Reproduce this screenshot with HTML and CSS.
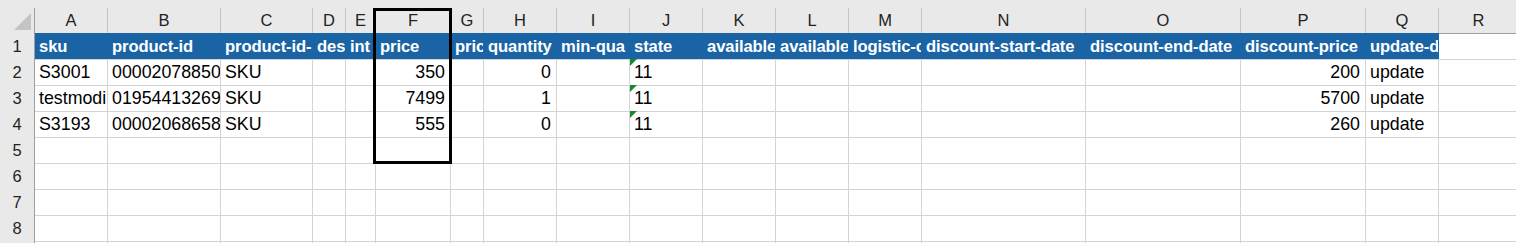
FILE: index.html
```html
<!DOCTYPE html>
<html lang="en">
<head>
  <meta charset="UTF-8" />
  <title>Sheet1</title>
  <link rel="stylesheet" href="styles.css">
</head>
<body>
  <div class="sheet">
    <div class="strip"></div>

    <div class="row cols">
      <div class="corner"><svg width="17" height="17" viewBox="0 0 17 17"><polygon points="17,0 17,17 0,17" fill="#c4c4c4"/></svg></div>
      <div class="ch">A</div><div class="ch">B</div><div class="ch">C</div><div class="ch">D</div>
      <div class="ch">E</div><div class="ch">F</div><div class="ch">G</div><div class="ch">H</div>
      <div class="ch">I</div><div class="ch">J</div><div class="ch">K</div><div class="ch">L</div>
      <div class="ch">M</div><div class="ch">N</div><div class="ch">O</div><div class="ch">P</div>
      <div class="ch">Q</div><div class="ch">R</div>
    </div>

    <!-- header cells show only what Excel leaves visible next to a filled neighbour -->
    <div class="row">
      <div class="rh">1</div>
      <div class="c hd">sku</div>
      <div class="c hd">product-id</div>
      <div class="c hd">product-id-</div>
      <div class="c hd">des</div>
      <div class="c hd">int</div>
      <div class="c hd">price</div>
      <div class="c hd">pric</div>
      <div class="c hd">quantity</div>
      <div class="c hd">min-qua</div>
      <div class="c hd">state</div>
      <div class="c hd">available</div>
      <div class="c hd">available</div>
      <div class="c hd">logistic-c</div>
      <div class="c hd">discount-start-date</div>
      <div class="c hd">discount-end-date</div>
      <div class="c hd">discount-price</div>
      <div class="c hd">update-d</div>
      <div class="c"></div>
    </div>

    <div class="row">
      <div class="rh">2</div>
      <div class="c">S3001</div>
      <div class="c">00002078850</div>
      <div class="c">SKU</div>
      <div class="c"></div><div class="c"></div>
      <div class="c n">350</div>
      <div class="c"></div>
      <div class="c n">0</div>
      <div class="c"></div>
      <div class="c flag">11</div>
      <div class="c"></div><div class="c"></div><div class="c"></div><div class="c"></div><div class="c"></div>
      <div class="c n">200</div>
      <div class="c">update</div>
      <div class="c"></div>
    </div>

    <div class="row">
      <div class="rh">3</div>
      <div class="c">testmodi</div>
      <div class="c">01954413269</div>
      <div class="c">SKU</div>
      <div class="c"></div><div class="c"></div>
      <div class="c n">7499</div>
      <div class="c"></div>
      <div class="c n">1</div>
      <div class="c"></div>
      <div class="c flag">11</div>
      <div class="c"></div><div class="c"></div><div class="c"></div><div class="c"></div><div class="c"></div>
      <div class="c n">5700</div>
      <div class="c">update</div>
      <div class="c"></div>
    </div>

    <div class="row">
      <div class="rh">4</div>
      <div class="c">S3193</div>
      <div class="c">00002068658</div>
      <div class="c">SKU</div>
      <div class="c"></div><div class="c"></div>
      <div class="c n">555</div>
      <div class="c"></div>
      <div class="c n">0</div>
      <div class="c"></div>
      <div class="c flag">11</div>
      <div class="c"></div><div class="c"></div><div class="c"></div><div class="c"></div><div class="c"></div>
      <div class="c n">260</div>
      <div class="c">update</div>
      <div class="c"></div>
    </div>

    <div class="row">
      <div class="rh">5</div>
      <div class="c"></div><div class="c"></div><div class="c"></div><div class="c"></div><div class="c"></div><div class="c"></div>
      <div class="c"></div><div class="c"></div><div class="c"></div><div class="c"></div><div class="c"></div><div class="c"></div>
      <div class="c"></div><div class="c"></div><div class="c"></div><div class="c"></div><div class="c"></div><div class="c"></div>
    </div>
    <div class="row">
      <div class="rh">6</div>
      <div class="c"></div><div class="c"></div><div class="c"></div><div class="c"></div><div class="c"></div><div class="c"></div>
      <div class="c"></div><div class="c"></div><div class="c"></div><div class="c"></div><div class="c"></div><div class="c"></div>
      <div class="c"></div><div class="c"></div><div class="c"></div><div class="c"></div><div class="c"></div><div class="c"></div>
    </div>
    <div class="row">
      <div class="rh">7</div>
      <div class="c"></div><div class="c"></div><div class="c"></div><div class="c"></div><div class="c"></div><div class="c"></div>
      <div class="c"></div><div class="c"></div><div class="c"></div><div class="c"></div><div class="c"></div><div class="c"></div>
      <div class="c"></div><div class="c"></div><div class="c"></div><div class="c"></div><div class="c"></div><div class="c"></div>
    </div>
    <div class="row">
      <div class="rh">8</div>
      <div class="c"></div><div class="c"></div><div class="c"></div><div class="c"></div><div class="c"></div><div class="c"></div>
      <div class="c"></div><div class="c"></div><div class="c"></div><div class="c"></div><div class="c"></div><div class="c"></div>
      <div class="c"></div><div class="c"></div><div class="c"></div><div class="c"></div><div class="c"></div><div class="c"></div>
    </div>
    <!-- next row only peeks in at the bottom edge -->
    <div class="row">
      <div class="rh"></div>
      <div class="c"></div><div class="c"></div><div class="c"></div><div class="c"></div><div class="c"></div><div class="c"></div>
      <div class="c"></div><div class="c"></div><div class="c"></div><div class="c"></div><div class="c"></div><div class="c"></div>
      <div class="c"></div><div class="c"></div><div class="c"></div><div class="c"></div><div class="c"></div><div class="c"></div>
    </div>

    <!-- selected range F1:F5 -->
    <div class="sel"></div>
  </div>
</body>
</html>
```

FILE: styles.css
```css
body {
  margin: 0;
  font-family: 'Liberation Sans', Arial, sans-serif;
  background: #fff;
  overflow: hidden;
}

.sheet {
  position: relative;
  width: 1516px;
  height: 243px;
  overflow: hidden;
}

.strip {
  height: 8px;
  background: #e9e9e9;
}

.row {
  display: grid;
  grid-template-columns: 35px 73px 113px 92px 33px 30px 75px 33px 73px 73px 73px 73px 73px 73px 164px 155px 125px 73px 80px;
  height: 26px;
}

.row.cols {
  height: 25px;
}

.corner {
  background: #e9e9e9;
  border-right: 1px solid #9e9e9e;
  border-bottom: 1px solid #9e9e9e;
  display: flex;
  align-items: flex-end;
  justify-content: flex-end;
  padding: 0 3px 3px 0;
}

.corner svg {
  display: block;
}

.ch {
  background: #e9e9e9;
  border-right: 1px solid #c6c6c6;
  border-bottom: 1px solid #9e9e9e;
  text-align: center;
  font-size: 16.5px;
  line-height: 25px;
  color: #222;
}

.rh {
  background: #e9e9e9;
  border-right: 1px solid #9e9e9e;
  border-bottom: 1px solid #c6c6c6;
  text-align: center;
  font-size: 16.5px;
  line-height: 26px;
  color: #222;
}

.c {
  position: relative;
  border-right: 1px solid #d4d4d4;
  border-bottom: 1px solid #d4d4d4;
  overflow: hidden;
  white-space: nowrap;
  padding: 1px 4px 0;
  font-size: 17.8px;
  line-height: 25px;
  color: #000;
}

.hd {
  background: #1a64a6;
  border-right-color: #1a64a6;
  color: #fff;
  font-size: 16.6px;
  letter-spacing: -0.1px;
  font-weight: bold;
}

.n {
  text-align: right;
  padding-right: 5px;
}

.flag::before {
  content: "";
  position: absolute;
  left: 0;
  top: 0;
  border-top: 7px solid #168a2c;
  border-right: 7px solid transparent;
}

.sel {
  position: absolute;
  left: 373px;
  top: 8px;
  width: 79px;
  height: 156px;
  box-sizing: border-box;
  border: 3px solid #000;
  pointer-events: none;
}
```
